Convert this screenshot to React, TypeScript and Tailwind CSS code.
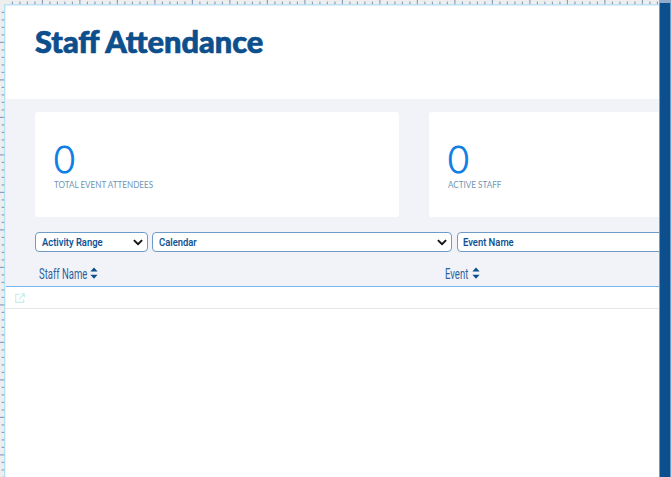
import React from "react";

const ticks = Array.from({ length: 90 }, (_, i) => ({
  at: 12.2 + i * 7.5,
  major: i % 5 === 4,
}));

function TopRuler() {
  return (
    <svg className="block h-[6px] w-[659px] shrink-0" viewBox="0 0 659 6">
      <rect width="659" height="6" fill="#eeeeef" />
      {ticks.map((t) => (
        <rect key={t.at} x={t.at - 0.4} y={t.major ? 0 : 1.6} width="1.2" height={t.major ? 5 : 3} fill="#8b9fc0" />
      ))}
      <rect x="4" y="4.2" width="655" height="1.4" fill="#b0e0f8" />
      <rect x="6" y="5.6" width="653" height="0.4" fill="#ffffff" />
    </svg>
  );
}

function SideRuler() {
  return (
    <svg className="block h-[471px] w-[6px] shrink-0" viewBox="0 6 6 471">
      <rect y="6" width="6" height="471" fill="#eeeeef" />
      {ticks.map((t) => (
        <rect key={t.at} x={t.major ? 0 : 1.6} y={t.at - 0.4} width={t.major ? 5 : 3} height="1.2" fill="#8b9fc0" />
      ))}
      <rect x="4.2" y="6" width="1.3" height="471" fill="#a5dcf7" />
      <rect x="5.5" y="6" width="0.5" height="471" fill="#ffffff" />
    </svg>
  );
}

function Chevron() {
  return (
    <svg className="mr-[4px] h-[7px] w-[10px]" viewBox="0 0 10 7" fill="none">
      <path d="M.9 1.1 5 5.1 9.1 1.1" stroke="#111111" strokeWidth="1.9" />
    </svg>
  );
}

function SortIcon() {
  return (
    <svg className="-mt-[2px] h-[12px] w-[8px]" viewBox="0 0 8 12">
      <path d="M0.4 4.5 4 .4 7.6 4.5ZM0.4 7.7h7.2L4 11.8Z" fill="#0c4f8c" />
    </svg>
  );
}

function StatCard({ label, className }: { label: string; className: string }) {
  return (
    <div className={"h-[105px] shrink-0 bg-white pl-[19px] pt-[28px] font-['Lato'] " + className}>
      <div className="h-[38px] origin-left scale-x-[0.97] text-[37px] font-light leading-[38px] text-[#0a7ee6] [-webkit-text-stroke:1px_#0a7ee6]">
        0
      </div>
      <div className="flex h-[12px] whitespace-nowrap text-[10px] leading-[12px] text-[#7095b5]">
        <span className="origin-left scale-x-[0.81]">{label}</span>
      </div>
    </div>
  );
}

function Select({ label, className }: { label: string; className: string }) {
  return (
    <div
      className={
        "flex h-[20px] shrink-0 items-center justify-between border border-[#6f9cc4] bg-white pl-[5.5px] " + className
      }
    >
      <span className="origin-left scale-x-[0.82] whitespace-nowrap font-['Roboto'] text-[11.5px] font-medium leading-[18px] text-[#0f5092] [-webkit-text-stroke:0.1px_#0f5092]">
        {label}
      </span>
      <Chevron />
    </div>
  );
}

function Heading({ label, className }: { label: string; className: string }) {
  return (
    <div className={"flex h-[20px] shrink-0 items-center " + className}>
      <span className="origin-left scale-x-[0.635] whitespace-nowrap font-['Roboto'] text-[15px] leading-[20px] text-[#2a639e]">
        {label}
      </span>
    </div>
  );
}

export default function App() {
  return (
    <div className="flex h-[477px] w-[671px] overflow-hidden bg-white">
      <div className="flex w-[659px] shrink-0 flex-col overflow-hidden">
        <TopRuler />
        <div className="flex">
          <SideRuler />
          <main className="w-[653px] shrink-0 overflow-hidden">
            <header className="h-[93px] pl-[29px] pt-[17px]">
              <h1 className="inline-block origin-left scale-x-[1.025] whitespace-nowrap font-['Lato'] text-[30px] font-black leading-[36px] text-[#0c4f8c] [-webkit-text-stroke:0.7px_#0c4f8c]">
                Staff Attendance
              </h1>
            </header>
            <section className="h-[187px] overflow-hidden bg-[#f2f3f8] pl-[29px] pt-[13px]">
              <div className="flex gap-[30px]">
                <StatCard label="TOTAL EVENT ATTENDEES" className="w-[364px] rounded-[3px]" />
                <StatCard label="ACTIVE STAFF" className="w-[240px] rounded-l-[3px]" />
              </div>
              <div className="mt-[15px] flex">
                <Select label="Activity Range" className="w-[113px] rounded-[4px]" />
                <Select label="Calendar" className="ml-[4px] w-[300px] rounded-[4px]" />
                <Select label="Event Name" className="ml-[4.5px] w-[240px] rounded-l-[4px]" />
              </div>
              <div className="mt-[12px] flex">
                <div className="flex w-[406px] items-center pl-[4px]">
                  <Heading label="Staff Name" className="w-[51px]" />
                  <SortIcon />
                </div>
                <div className="flex items-center pl-[4px]">
                  <Heading label="Event" className="w-[27px]" />
                  <SortIcon />
                </div>
              </div>
            </section>
            <div className="h-[23px] border-b border-t border-b-[#e5e6e8] border-t-[#72b5ef] pl-[9px] pt-[6px]">
              <svg className="block h-[11px] w-[11px]" viewBox="0 0 11 11" fill="none" stroke="#c5efee" strokeWidth="1.2">
                <path d="M4.5 1.3H.7V9.3H8.7V6M4 6.3 8.9 1.3M6 .8H9.4V4.2" />
              </svg>
            </div>
          </main>
        </div>
      </div>
      <aside className="flex w-[12px] shrink-0 flex-col">
        <div className="h-[3px] bg-[#91abca]" />
        <div className="grow border-x border-l-[#6f9dc5] border-r-[#6f9dc5] bg-[#0c4f8c]" />
      </aside>
    </div>
  );
}
